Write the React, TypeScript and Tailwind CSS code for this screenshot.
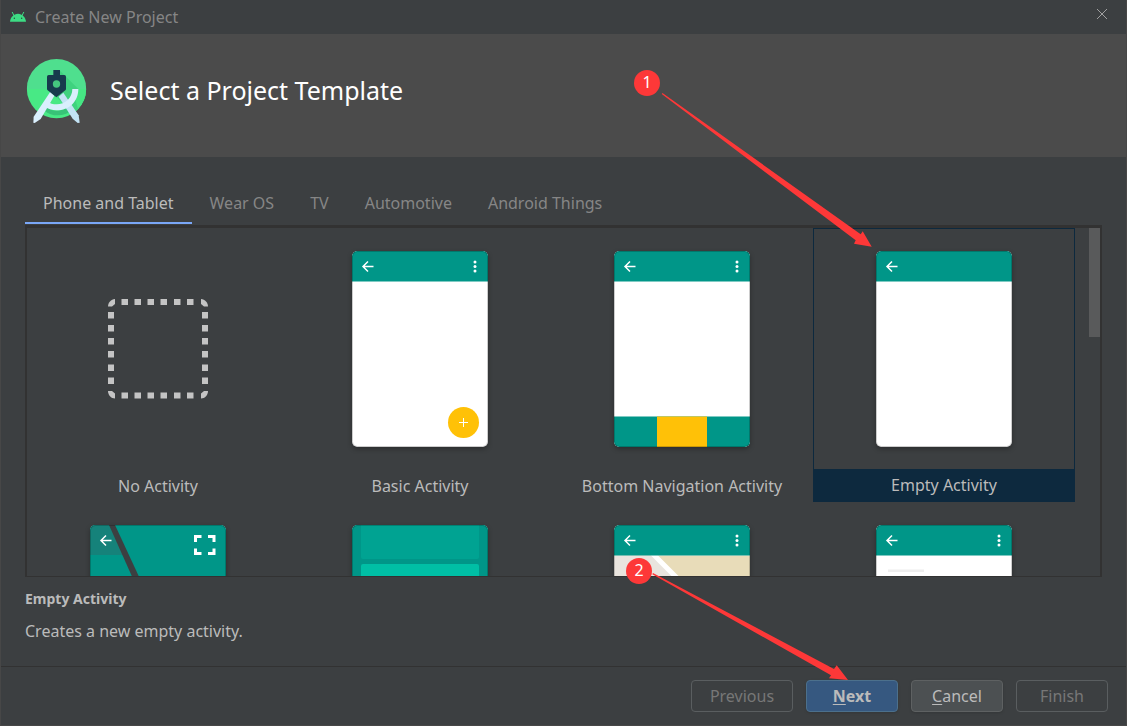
import React from "react";

type TemplateKind =
  | "none"
  | "basic"
  | "bottomNav"
  | "empty"
  | "fullscreen"
  | "admob"
  | "maps"
  | "detail";

const templates: { kind: TemplateKind; name: string; captioned: boolean }[] = [
  { kind: "none", name: "No Activity", captioned: true },
  { kind: "basic", name: "Basic Activity", captioned: true },
  { kind: "bottomNav", name: "Bottom Navigation Activity", captioned: true },
  { kind: "empty", name: "Empty Activity", captioned: true },
  { kind: "fullscreen", name: "Fullscreen Activity", captioned: false },
  { kind: "admob", name: "Google AdMob Ads Activity", captioned: false },
  { kind: "maps", name: "Google Maps Activity", captioned: false },
  { kind: "detail", name: "Master/Detail Flow", captioned: false },
];

const tabs = ["Phone and Tablet", "Wear OS", "TV", "Automotive", "Android Things"];

function AndroidHead() {
  return (
    <svg className="h-3 w-4 shrink-0" viewBox="0 0 48 36" aria-hidden="true">
      <path d="M0 32C1 19 11 8 24 8s23 11 24 24z" fill="#3ddc84" />
      <path d="M12 14 7 4M36 14l5-10" stroke="#3ddc84" strokeWidth="3" strokeLinecap="round" />
      <circle cx="13" cy="22" r="2.2" fill="#25503a" />
      <circle cx="35" cy="22" r="2.2" fill="#25503a" />
    </svg>
  );
}

function StudioLogo() {
  return (
    <svg className="h-[66px] w-[62px] shrink-0" viewBox="78 174 186 198" aria-hidden="true">
      <defs>
        <clipPath id="disc">
          <circle cx="169.500" cy="266" r="89" />
        </clipPath>
      </defs>
      <g clipPath="url(#disc)">
        <rect x="80" y="176" width="180" height="91" fill="#4fdf8e" />
        <rect x="80" y="267" width="180" height="90" fill="#48e985" />
        <path d="M180 212 260 292V356H232L169 290z" fill="#3fd27f" />
        <path d="M217 267h50v70h-30z" fill="#46e684" />
        <path d="M135 318c20 20 55 18 74-2l8 14c-22 20-60 22-84 2z" fill="#38c377" />
      </g>
      <path d="M176 290 190 278 236 346 239 368 233 369 218 356z" fill="#c3e3f5" />
      <path d="M151 275 163 287 122 357 104 369 100 368 101 350z" fill="#daeffd" />
      <path
        d="M217 267h18c0 38-28 64-65 64-14 0-26-4-38-12l10-14c8 5 17 8 28 8 26 0 47-20 47-46z"
        fill="#daeffd"
      />
      <path
        d="M160 210h20v15h13q5 0 5 5v36q0 3-2 5l-27 21-26-21q-2-2-2-5v-36q0-5 5-5h14z"
        fill="#173b4d"
      />
      <circle cx="169.500" cy="252" r="11" fill="#45c77f" />
    </svg>
  );
}

function BackArrow() {
  return (
    <path
      d="M21.500 15.500H11M16 10.500l-5 5 5 5"
      fill="none"
      stroke="#fff"
      strokeWidth="1.500"
    />
  );
}

function Dots() {
  return (
    <g fill="#fff">
      <circle cx="123" cy="11" r="1.500" />
      <circle cx="123" cy="15.500" r="1.500" />
      <circle cx="123" cy="20" r="1.500" />
    </g>
  );
}

function Thumbnail({ kind }: { kind: TemplateKind }) {
  if (kind === "none") {
    const marks = [13.5, 26.5, 39.5, 52.5, 66, 79];
    return (
      <svg className="h-[196px] w-[136px]" viewBox="0 0 136 196" aria-hidden="true">
        <g transform="translate(18 48)" fill="#c4c4c4">
          {marks.map((m) => (
            <g key={m}>
              <rect x={m} y="0" width="6.500" height="6" />
              <rect x={m} y="93.500" width="6.500" height="6" />
              <rect x="0" y={m - 0.5} width="6" height="6.500" />
              <rect x="94" y={m - 0.5} width="6" height="6.500" />
            </g>
          ))}
          <path d="M7 0v5L4 7.500H0C0 4 3 0 7 0z" />
          <path d="M93 0v5l3 2.500h4C100 4 97 0 93 0z" />
          <path d="M0 92h4l3 2.500v5C3 99.500 0 96 0 92z" />
          <path d="M100 92h-4l-3 2.500v5c4 0 7-3.500 7-7.500z" />
        </g>
      </svg>
    );
  }
  const clip = `phone-${kind}`;
  return (
    <svg
      className="h-[196px] w-[136px] rounded-[5px] shadow-[0_2px_5px_rgba(0,0,0,0.3)]"
      viewBox="0 0 136 196"
      aria-hidden="true"
    >
      <defs>
        <clipPath id={clip}>
          <rect width="136" height="196" rx="5" />
        </clipPath>
      </defs>
      <g clipPath={`url(#${clip})`}>
        <rect width="136" height="196" fill="#fff" />
        {kind === "maps" && (
          <>
            <rect y="30.500" width="136" height="166" fill="#e8dcb9" />
            <path d="M0 30.500h40l40 40V196H0z" fill="#e9e4de" />
            <path d="M36 26l60 60" stroke="#fff" strokeWidth="5" />
          </>
        )}
        <rect width="136" height="30.500" fill="#009688" />
        {kind === "basic" && (
          <>
            <circle cx="111.500" cy="171.500" r="15.500" fill="#ffc107" />
            <path d="M107 171.500h9M111.500 167v9" stroke="#fff" />
          </>
        )}
        {kind === "bottomNav" && (
          <>
            <rect y="165.500" width="136" height="31" fill="#009688" />
            <rect x="43" y="165.500" width="50" height="31" fill="#ffc107" />
          </>
        )}
        {kind === "fullscreen" && (
          <>
            <rect width="136" height="196" fill="#009688" />
            <path d="M0 0h21l14 30H0z" fill="#15827a" />
            <path d="M19 0h6l26 56h-7z" fill="#3c3f41" />
            <path
              d="M105.500 17v-5.500h6M118 11.500h6V17M105.500 23.500v5h6M118 28.500h6v-5"
              fill="none"
              stroke="#fff"
              strokeWidth="3"
            />
          </>
        )}
        {kind === "admob" && (
          <>
            <rect width="136" height="196" fill="#009688" />
            <path d="M9 0h118v32q0 2-2 2H11q-2 0-2-2z" fill="#00a392" />
            <rect x="9" y="39" width="118" height="60" rx="2" fill="#00bfa5" />
          </>
        )}
        {kind === "detail" && <rect x="12" y="44.500" width="36" height="2.500" fill="#eee" />}
        {kind !== "admob" && <BackArrow />}
        {(kind === "basic" || kind === "bottomNav" || kind === "maps" || kind === "detail") && <Dots />}
        <rect x="0.500" y="0.500" width="135" height="195" rx="5" fill="none" stroke="#000" strokeOpacity="0.200" />
      </g>
    </svg>
  );
}

function Annotations() {
  return (
    <div className="pointer-events-none absolute -inset-x-px inset-y-0 overflow-hidden text-white">
      <svg className="absolute top-0 left-0 h-[726px] w-[1127px]" viewBox="0 0 1127 726" aria-hidden="true">
        <g fill="#fd3838">
          <path d="M662.500 93 860.700 234.300l2-3L871.700 246.700 854 243.700l1.700-3.400L661.700 94z" />
          <path d="M653 573 834 669l2.700-3.700L848 680l-19-1.700 2-3L652.300 574.200z" />
        </g>
      </svg>
      <span className="absolute top-[70px] left-[634px] flex size-[26px] items-center justify-center rounded-full bg-[#fd3838] pb-0.5 leading-none">
        1
      </span>
      <span className="absolute top-[558px] left-[626px] flex size-[26px] items-center justify-center rounded-full bg-[#fd3838] pb-0.5 leading-none">
        2
      </span>
    </div>
  );
}

const buttonBase = "h-8 rounded border leading-6";

export default function App() {
  return (
    <div className="relative flex h-screen flex-col border-x border-b border-[#474747] bg-[#3c3f41] font-['Noto_Sans',sans-serif] text-base text-[#bbbbbb]">
      <header className="flex h-[34px] shrink-0 items-center gap-[9px] pr-4 pl-[9px] text-[#868686]">
        <AndroidHead />
        <span className="flex-1">Create New Project</span>
        <button type="button" aria-label="Close" className="mb-1.5 p-0.5">
          <svg className="size-3" viewBox="0 0 12 12" aria-hidden="true">
            <path d="M1 1l10 10M11 1 1 11" stroke="#a0a0a0" />
          </svg>
        </button>
      </header>

      <div className="flex h-[123px] shrink-0 items-center gap-[22px] bg-[#4b4b4b] pb-2.5 pl-[25px] text-white">
        <StudioLogo />
        <h1 className="text-[25px]">Select a Project Template</h1>
      </div>

      <main className="flex min-h-0 flex-1 flex-col px-6 pt-[25px]">
        <div role="tablist" className="flex shrink-0">
          {tabs.map((tab, i) => (
            <button
              key={tab}
              type="button"
              role="tab"
              aria-selected={i === 0}
              className={
                i === 0
                  ? "h-[42px] border-b-2 border-[#7aa7f7] px-[18px] pt-0.5 text-[#bbbbbb]"
                  : "h-[42px] border-b-2 border-transparent px-[18px] pt-0.5 text-[#868686]"
              }
            >
              {tab}
            </button>
          ))}
        </div>

        <div className="mt-px flex min-h-0 flex-1 overflow-hidden border-2 border-t-3 border-b border-[#323232]">
          <div role="listbox" aria-label="Templates" className="grid flex-1 grid-cols-4 content-start">
            {templates.map(({ kind, name, captioned }) => {
              const selected = kind === "empty";
              return (
                <button
                  key={kind}
                  type="button"
                  role="option"
                  aria-selected={selected}
                  aria-label={name}
                  className={
                    selected
                      ? "flex h-[274px] flex-col items-center border border-[#0d293e] pt-[22px]"
                      : "flex h-[274px] flex-col items-center border border-transparent pt-[22px]"
                  }
                >
                  <Thumbnail kind={kind} />
                  {captioned && (
                    <span
                      className={
                        selected
                          ? "mt-[22px] flex w-full flex-1 items-center justify-center bg-[#0d293e]"
                          : "mt-6 flex w-full flex-1 items-center justify-center"
                      }
                    >
                      {name}
                    </span>
                  )}
                </button>
              );
            })}
          </div>
          <div className="ml-3.5 w-[11px] shrink-0">
            <div className="h-[109px] bg-[#595a5b]" />
          </div>
        </div>

        <section className="shrink-0 pt-2.5 pb-[23px]">
          <h2 className="text-sm leading-6 font-bold">Empty Activity</h2>
          <p className="mt-2 leading-6">Creates a new empty activity.</p>
        </section>
      </main>

      <footer className="flex shrink-0 justify-end gap-[13px] border-t border-[#323232] px-[18px] py-[13px]">
        <button type="button" disabled className={`${buttonBase} w-[102px] border-[#5a5e60] text-[#777777]`}>
          Previous
        </button>
        <button type="button" className={`${buttonBase} w-[92px] border-[#4c708c] bg-[#365880] font-bold shadow-sm`}>
          <span className="underline underline-offset-2">N</span>ext
        </button>
        <button type="button" className={`${buttonBase} w-[92px] border-[#5e6162] bg-[#4c5052] shadow-sm`}>
          <span className="underline underline-offset-2">C</span>ancel
        </button>
        <button type="button" disabled className={`${buttonBase} w-[92px] border-[#5a5e60] text-[#777777]`}>
          Finish
        </button>
      </footer>

      <Annotations />
    </div>
  );
}
